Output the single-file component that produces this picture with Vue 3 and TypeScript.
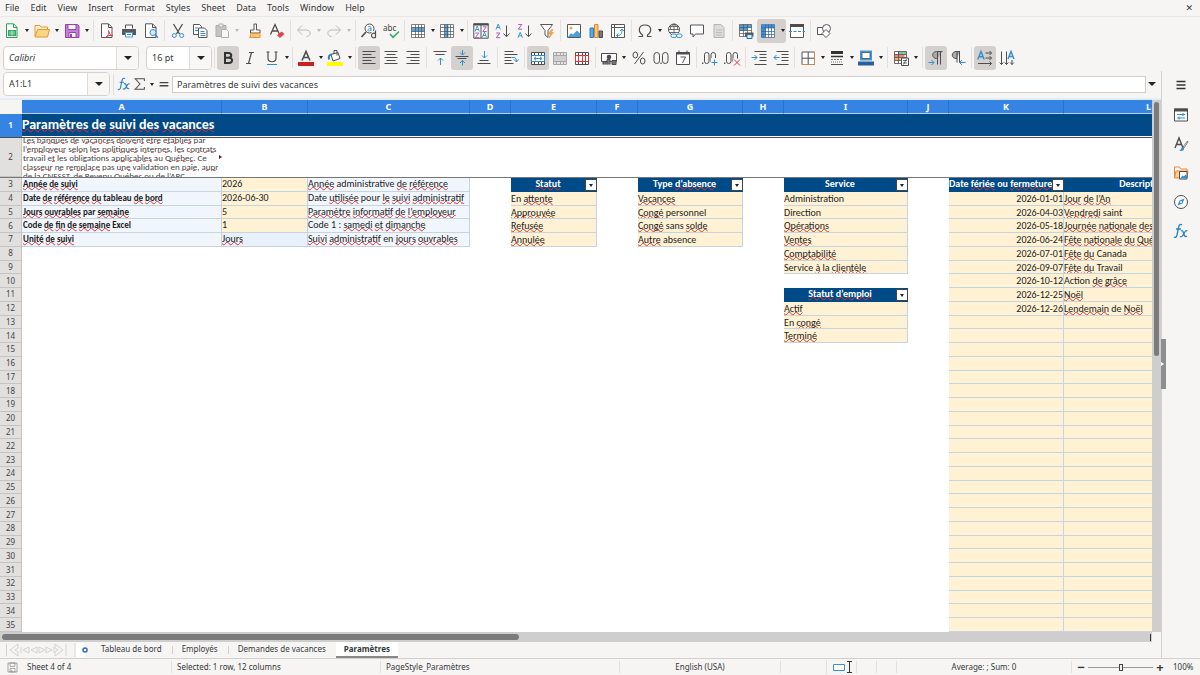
<script setup lang="ts">
import { ref } from 'vue'

interface Tool {
  id: string
  menu?: boolean
  active?: boolean
  dim?: boolean
  narrow?: boolean
}
interface Cell {
  text: string
  kind: string
  filter?: boolean
}

const menus = ['File', 'Edit', 'View', 'Insert', 'Format', 'Styles', 'Sheet', 'Data', 'Tools', 'Window', 'Help']
const columns = ['A', 'B', 'C', 'D', 'E', 'F', 'G', 'H', 'I', 'J', 'K', 'L']

const ink = 'fill="none" stroke="#4d4d4f"'
const blue = 'fill="none" stroke="#2f8fd0"'
const red = 'fill="none" stroke="#e0353d"'
const gridLines = 'M1.500 1.500h13v13h-13zM1.500 4.500h13M1.500 8.500h13M1.500 11.500h13M5.500 1.500v13M8.500 1.500v13M11.500 1.500v13'
const mergeGrid = 'M1.500 2.500h13v12h-13zM1.500 5.500h13M1.500 11.500h13M4.500 2.500v3M8.500 2.500v3M11.500 2.500v3M4.500 11.500v3M8.500 11.500v3M11.500 11.500v3'
const ff = 'font-family="Noto Sans, sans-serif"'
const letterA = (x: number, y: number) => `<path d="M${x} ${y + 5}l2.200-5.500l2.200 5.500M${x + 0.8} ${y + 3}h2.800" ${blue} stroke-width=".9"/>`
const letterZ = (x: number, y: number) => `<path d="M${x + 0.3} ${y}h3.600l-3.600 4.700h3.900" fill="none" stroke="#a44cb8" stroke-width=".9"/>`

const art: Record<string, string> = {
  new: `<path d="M2.500 .8h7l3.500 3.500v10.200h-10.500z" fill="#fff" stroke="#28a05a"/><path d="M9.500 1v3.500h3.500" fill="none" stroke="#28a05a"/><path d="M4 7h8v6h-8z" fill="#32a65f"/><path d="M5 9h6M5 11h6M8 7.500v5" stroke="#fff" stroke-width=".6"/>`,
  open: `<path d="M1 13.500v-11h5l1 1.500h6.500v3" fill="#fff3d8" stroke="#e8952e"/><path d="M1 14l2.500-7.500h12l-2 7.500z" fill="#fbd583" stroke="#e8952e"/>`,
  save: `<path d="M1.500 1.500h12l1.500 1.500v11.500h-13.500z" fill="#c77fd6" stroke="#9b3fb2"/><path d="M4 1.500h8v5h-8zM5 9.500h7v5h-7z" fill="#fff" stroke="#9b3fb2"/><path d="M6 11h2v3h-2z" fill="#9b3fb2"/>`,
  pdf: `<path d="M2.500 .8h7l3.500 3.500v10.200h-10.500z" fill="#fff" stroke="#56565a"/><path d="M9.500 1v3.500h3.500" ${ink}/><path d="M6.500 14.500c3-2 3.500-4 3-7c1 4 2 5 4.500 5c-3-.6-5 .2-7.500 2z" ${red}/>`,
  print: `<path d="M4.500 5.500v-3.500h7v3.500" fill="#fff" stroke="#4d4d4f"/><path d="M1 6h14v6h-14z" fill="#55585c"/><path d="M4.500 9.500h7v4.500h-7z" fill="#fff" stroke="#4596d8"/><path d="M6 11.500h4" ${blue}/>`,
  preview: `<path d="M2.500 .8h7l3.500 3.500v10.200h-10.500z" fill="#fff" stroke="#56565a"/><path d="M9.500 1v3.500h3.500" ${ink}/><circle cx="10" cy="9.500" r="3" fill="#d7edfb" stroke="#2f8fd0"/><path d="M12 11.500l3 3.200" stroke="#2f8fd0" stroke-width="1.400"/>`,
  cut: `<path d="M3.500 1l6 10M12.500 1l-6 10" ${ink} stroke-width="1.300"/><circle cx="4.300" cy="12.500" r="2" ${blue}/><circle cx="11.700" cy="12.500" r="2" ${blue}/>`,
  copy: `<path d="M1.500 1.500h6l2 2v8h-8z" fill="#fff" stroke="#56565a"/><path d="M6.500 5h6l2.500 2.500v7h-8.500z" fill="#fff" stroke="#56565a"/><path d="M3 5h3M3 7.500h3M8.500 8.500h4M8.500 10.500h5M8.500 12.500h5" ${blue}/>`,
  paste: `<path d="M2 2.500h10v11h-10z" fill="#c4c4c4" stroke="#adadad"/><path d="M5 1h4v3h-4z" fill="#eee" stroke="#adadad"/><path d="M7.500 6.500h5l2 2v6h-7z" fill="#f8f8f8" stroke="#adadad"/>`,
  clone: `<path d="M7 1h2.500v6h3.500v3h-9.500v-3h3.500z" fill="#fff" stroke="#56565a"/><path d="M3.500 10.500h9.500v4h-10.500c1-1 1-2 1-4z" fill="#fbc77a" stroke="#e8952e"/>`,
  clear: `<path d="M1.500 11.500l4.500-10l4.500 10M3 8h6" ${ink} stroke-width="1.300"/><path d="M8 12.500l4.500-4l3 2.500l-4.500 4z" fill="#e7424b"/>`,
  undo: `<path d="M2 7h8c6 0 5 6.500.5 6.500M6 2.500l-4.500 4.500l4.500 4.500" fill="none" stroke="#b9b9b9"/>`,
  redo: `<path d="M14 7h-8c-6 0-5 6.500-.5 6.500M10 2.500l4.500 4.500l-4.500 4.500" fill="none" stroke="#b9b9b9"/>`,
  find: `<circle cx="8.500" cy="5.500" r="4.500" fill="#fff" stroke="#4d4d4f"/><path d="M5 9l-4.500 5" stroke="#4d4d4f" stroke-width="1.600"/><path d="M7 4c1-1 3-1 3 1v3M10 5.700c-4-.5-4 2.800-1.500 2.200l1.500-1" ${blue} stroke-width=".9"/><path d="M10.500 8h5v7h-5z" fill="#f6f5f4"/><path d="M14.500 7.500v7.500M14.500 11c-1-1.500-4-1-4 1.500s3 3 4 1.500" ${ink} stroke-width="1.200"/>`,
  spell: `<text x="0" y="7.500" font-size="8" ${ff} fill="#3d3d3f">abc</text><path d="M7 11l3 3.300l6-5.800" fill="none" stroke="#35ac67" stroke-width="1.600"/>`,
  rows: `<path d="M1.500 1.500h13v13h-13z" fill="#fff"/><path d="M1.500 4.500h13v4h-13z" fill="#57a9e6"/><path d="${gridLines}" ${ink} stroke-width=".7"/>`,
  cols: `<path d="M1.500 1.500h13v13h-13z" fill="#fff"/><path d="M5.500 1.500h4v13h-4z" fill="#57a9e6"/><path d="${gridLines}" ${ink} stroke-width=".7"/>`,
  sort: `<path d="M.8 .8h14.400v14.400h-14.400zM8 1v14" fill="#fff" stroke="#4d4d4f"/><path d="M.5 .5h15v2h-15z" fill="#4d4d4f"/>${letterA(2, 3.500)}${letterZ(2, 10)}${letterZ(9.500, 3.800)}${letterA(9.300, 9.500)}`,
  asc: `${letterA(1, 1.500)}${letterZ(1, 10)}<path d="M11.500 2.500v11M8.500 10.500l3 3.200l3-3.200" ${ink}/>`,
  desc: `${letterZ(1, 1.500)}${letterA(1, 9.800)}<path d="M11.500 2.500v11M8.500 10.500l3 3.200l3-3.200" ${ink}/>`,
  filter: `<path d="M1.500 1.500h12l-4.500 6v7l-3-2.500v-4.500z" fill="#fff" stroke="#56565a"/><path d="M12.500 6.500l-3.500 4.500h2.500l-1.500 4l4.500-5.500h-2.500l2-3z" fill="#f5a649" stroke="#e8852e" stroke-width=".5"/>`,
  image: `<path d="M1.500 1.500h13v13h-13z" fill="#fff" stroke="#56565a"/><circle cx="5" cy="5" r="1.500" fill="#f5a649"/><path d="M2 14l3-4l2 1.500l4-4l3.500 3.500v3z" fill="#4b9fdf"/>`,
  chart: `<path d="M2 5h3.500v9.500h-3.500z" fill="#57a9e6" stroke="#2f7fc0"/><path d="M6.500 1.500h3.500v13h-3.500z" fill="#fbc77a" stroke="#e8852e"/><path d="M11 8h3.500v6.500h-3.500z" fill="#77777a" stroke="#4d4d4f"/>`,
  pivot: `<path d="M1.500 1.500h13v13h-13zM1.500 4.500h13M4.500 1.500v13" fill="#fff" stroke="#56565a"/><path d="M7 12.500c5 0 5-3 5-6M10 8l2-2l2 2M8.500 10.500l-2 2l2 2" ${blue}/>`,
  omega: `<path d="M1.500 13.500h4v-1.500c-5-3.500-4-10 2.500-10s7.500 6.500 2.500 10v1.500h4" ${ink} stroke-width="1.200"/>`,
  link: `<circle cx="7" cy="6.500" r="5.500" fill="#fff" stroke="#4d4d4f"/><path d="M1.500 6.500h11M7 1v11M2.500 3.500h9M2.500 9.500h9" ${ink} stroke-width=".8"/><path d="M4 6.500q-2-2.500 3-5.500q5 3 3 5.500" ${ink} stroke-width=".8"/><path d="M5 10h10v5h-10z" fill="#f6f5f4"/><rect x="4" y="11" width="5.500" height="3.500" rx="1.700" ${blue}/><rect x="9.500" y="11" width="5.500" height="3.500" rx="1.700" ${blue}/>`,
  comment: `<path d="M1.500 2h13v9h-8l-2.500 3v-3h-2.500z" fill="#fff" stroke="#56565a"/>`,
  header: `<path d="M3 1.500h7l3 3v10h-10z" fill="#ddd" stroke="#b5b5b5"/><path d="M5 7h6M5 9.500h6M5 12h6" stroke="#bbb"/>`,
  printarea: `<path d="M1.500 1.500h12v12h-12z" fill="#fff"/><path d="M1.500 1.500h12v3h-12zM1.500 1.500h8v6h-8z" fill="#4b9fdf"/><path d="M1.500 1.500h12v12h-12zM1.500 4.500h12M1.500 7.500h12M1.500 10.500h12M5.500 1.500v12M9.500 1.500v12" ${ink} stroke-width=".7"/><path d="M7 9.500h8.500v4h-8.500z" fill="#55585c"/><path d="M9 11.500h5v4h-5z" fill="#d7edfb" stroke="#2f6fb0"/>`,
  freeze: `<path d="M1.500 1.500h13v13h-13z" fill="#fff"/><path d="M1.500 2h13v3h-13zM1.500 2h4v12.500h-4z" fill="#3b8fdb"/><path d="M1.500 1.500h13v13h-13zM1.500 5h13M1.500 8.500h13M1.500 11.500h13M5.500 1.500v13M8.500 1.500v13M11.500 1.500v13" fill="none" stroke="#2b5f92" stroke-width=".7"/>`,
  split: `<path d="M1.500 1.500h13v13h-13z" fill="#fff" stroke="#56565a"/><path d="M1 1h14v3h-14z" fill="#4d4d4f"/><path d="M0 8.500h16" stroke="#2f8fd0" stroke-dasharray="3 1.500"/>`,
  shapes: `<path d="M1.500 4.500h7v7h-7z" fill="#fff" stroke="#56565a"/><circle cx="10.500" cy="5.500" r="4" fill="#fff" stroke="#56565a"/><path d="M10 6.500l4 4l-4 4l-4-4z" fill="#fff" stroke="#56565a"/>`,
  bold: `<path d="M5 3h3.500c3.800 0 3.500 4.700 0 4.700h-3.500zM5 7.700h4c4.200 0 4 5.300 0 5.300h-4z" fill="none" stroke="#333" stroke-width="2"/>`,
  italic: `<path d="M7 2.500h5M4 13.500h5M9.500 2.500l-3 11" ${ink} stroke-width="1.200"/>`,
  underline: `<path d="M4 2v6c0 5 8 5 8 0v-6M2.500 2h3M10.500 2h3" ${ink} stroke-width="1.200"/><path d="M3 14.500h10" stroke="#2f8fd0"/>`,
  fontcolor: `<path d="M4 10.500l4-9l4 9M5.300 7.500h5.400" ${ink} stroke-width="1.600"/><path d="M0 12h16v4h-16z" fill="#c9211e"/>`,
  fill: `<path d="M4 4.500l7-2l2 6l-7 2.500z" fill="#fff" stroke="#4d4d4f"/><path d="M7 4v-3.500h3v5" ${ink}/><path d="M5 4.500q-4 0-3 5" stroke="#2f7fc0" fill="none" stroke-width="2"/><path d="M0 12h16v4h-16z" fill="#ff0"/>`,
  left: `<path d="M1.500 1.500h13M1.500 4.500h9M1.500 7.500h13M1.500 10.500h9M1.500 13.500h13" ${ink}/>`,
  center: `<path d="M1.500 1.500h13M3.500 4.500h9M1.500 7.500h13M3.500 10.500h9M1.500 13.500h13" ${ink}/>`,
  right: `<path d="M1.500 1.500h13M5.500 4.500h9M1.500 7.500h13M5.500 10.500h9M1.500 13.500h13" ${ink}/>`,
  top: `<path d="M1.500 1.500h13M3.500 4.500h9" ${ink}/><path d="M8.500 15v-7M6 10.500l2.500-2.500l2.500 2.500" ${blue}/>`,
  middle: `<path d="M1.500 6.500h13M3.500 8.500h9" ${ink}/><path d="M8.500 0v5M6 2.500l2.500 2.500l2.500-2.500M8.500 15.500v-5M6 13l2.500-2.500l2.500 2.500" ${blue}/>`,
  bottom: `<path d="M1.500 13.500h13M3.500 10.500h9" ${ink}/><path d="M8.500 1v7M6 5.500l2.500 2.500l2.500-2.500" ${blue}/>`,
  wrap: `<path d="M1.500 1.500h9M1.500 4.500h13M1.500 7.500h7M1.500 10.500h7M1.500 13.500h9" ${ink}/><path d="M9 7.500h2.500q2 0 2 4.500M11 9.500l2.500 2.500l2-2.500" ${blue}/>`,
  merge: `<path d="M1.500 2.500h13v12h-13z" fill="#fff"/><path d="${mergeGrid}" ${ink}/><path d="M1.500 5.500h13v6h-13zM4 8.500h8M6 6.800l-2 1.700l2 1.700M10 6.800l2 1.700l-2 1.700" ${blue}/>`,
  merge2: `<path d="M1.500 2.500h13v12h-13z" fill="#e3e3e3"/><path d="M1.500 5.500h13v6h-13z" fill="#cfcfcf"/><path d="${mergeGrid}" fill="none" stroke="#a7a7a7"/>`,
  unmerge: `<path d="M1.500 2.500h13v12h-13z" fill="#fff"/><path d="${mergeGrid}" ${ink}/><path d="M1.500 5.500h13v6h-13zM4.500 5.500v6M8.500 5.500v6M11.500 5.500v6" ${red}/>`,
  currency: `<path d="M.5 3.500h15v8h-15z" fill="#fff" stroke="#4d4d4f"/><circle cx="8" cy="7" r="2.300" fill="#4d4d4f"/><path d="M2 14.500v-3h3v3M6 14.500v-5h3v5M11 14.500v-4h4v4z" fill="#77777a" stroke="#4d4d4f"/>`,
  percent: `<ellipse cx="4.300" cy="5" rx="2.300" ry="3" ${ink}/><ellipse cx="11.700" cy="11" rx="2.300" ry="3" ${ink}/><path d="M12.500 2l-9 12" ${ink}/>`,
  number: `<rect x="1" y="2.500" width="5.500" height="11" rx="2.700" ${ink}/><rect x="9.500" y="2.500" width="5.500" height="11" rx="2.700" ${ink}/><path d="M8 12.500v1.500" stroke="#4d4d4f" stroke-width="1.300"/>`,
  date: `<path d="M1.500 2.500h13v12h-13z" fill="#fff" stroke="#4d4d4f"/><path d="M1 2.500h14v2h-14z" fill="#4d4d4f"/><path d="M4 .5v3M12 .5v3M5.500 7h5l-3 6" ${ink}/>`,
  adddec: `<path d="M.7 12.500v1.500" stroke="#4d4d4f" stroke-width="1.300"/><rect x="2.500" y="2.500" width="4.500" height="11" rx="2.200" ${ink}/><rect x="9" y="2.500" width="4.500" height="11" rx="2.200" ${ink}/><path d="M9 8h7v8h-7z" fill="#f6f5f4"/><path d="M12.500 9.500v6M9.500 12.500h6" ${blue}/>`,
  deldec: `<path d="M.7 12.500v1.500" stroke="#4d4d4f" stroke-width="1.300"/><rect x="2.500" y="2.500" width="4.500" height="11" rx="2.200" ${ink}/><rect x="9" y="2.500" width="4.500" height="11" rx="2.200" ${ink}/><path d="M9 8.500h7v8h-7z" fill="#f6f5f4"/><path d="M10 9.500l6 6M16 9.500l-6 6" ${red}/>`,
  indent: `<path d="M3.500 1.500h12M8.500 4.500h7M8.500 7.500h7M8.500 10.500h7M3.500 14.500h12" ${ink}/><path d="M.5 7.500h5.500M3.500 5l2.500 2.500l-2.500 2.500" ${blue}/>`,
  outdent: `<path d="M3.500 1.500h12M8.500 4.500h7M8.500 7.500h7M8.500 10.500h7M3.500 14.500h12" ${ink}/><path d="M1 7.500h5.500M3.500 5l-2.500 2.500l2.500 2.500" ${blue}/>`,
  borders: `<path d="M2 2h12.500v12.500h-12.500z" fill="#fff" stroke="#56565a"/><path d="M8.200 2v12.500M2 8.200h12.500" ${ink}/><path d="M2 14.500h12.500v-12.500" fill="none" stroke="#c98a4d"/>`,
  linestyle: `<path d="M2 2.500h12" stroke="#333" stroke-width="3"/><path d="M2 6.500h12" stroke="#333" stroke-width="1.500"/><path d="M2 9.500h12" stroke="#77777a" stroke-dasharray="2 1"/><path d="M2 12h12" stroke="#77777a" stroke-dasharray="1 1"/><path d="M2 14.500h12" stroke="#4d4d4f"/>`,
  bordercolor: `<path d="M3 1.500h10v8h-10z" fill="#fff" stroke="#4596d8" stroke-width="2"/><path d="M4 2.500h8v6h-8z" ${ink} stroke-width=".8"/><path d="M0 11.500h16v4h-16z" fill="#2a6099"/>`,
  conditional: `<path d="M1.500 1.500h12v12h-12z" fill="#fff"/><path d="M5 1.500h8v3h-8z" fill="#7cc896"/><path d="M1.500 4.500h10v3h-10z" fill="#f0827c"/><path d="M1.500 7.500h6v3h-6z" fill="#f7b16a"/><path d="M1.500 1.500h12v12h-12zM1.500 4.500h12M1.500 7.500h12M1.500 10.500h12M5.500 1.500v12" ${ink} stroke-width=".8"/><path d="M8.500 8h7v7.500h-7z" fill="#fff" stroke="#4d4d4f"/><path d="M10 10.500h4M10 13h4M13.500 9l-3 5.500" ${ink} stroke-width=".8"/>`,
  ltr: `<path d="M14.500 1.500h-6c-5 0-5 7 0 7h1" fill="#aaa" stroke="#56565a"/><path d="M9.500 1.500v13M12.500 1.500v13" ${ink}/><path d="M.5 12.500h5.500M3.500 10l2.500 2.500l-2.500 2.500" ${blue}/>`,
  rtl: `<path d="M10 1.500h-4c-5 0-5 7 0 7h1" fill="#aaa" stroke="#56565a"/><path d="M7 1.500v11M9.500 1.500v11" ${ink}/><path d="M9.500 12.500h6M12 10l-2.500 2.500l2.500 2.500" ${blue}/>`,
  horiz: `<path d="M.8 9.500l3.200-8l3.200 8M2 6.800h4" ${blue} stroke-width="1.400"/><path d="M8.500 3h6M12.500 1l2 2l-2 2M8.500 8h6M12.500 6l2 2l-2 2M1 13.500h13.500M12.500 11.500l2 2l-2 2" ${ink}/>`,
  vert: `<path d="M9 9l3-7.500l3 7.500M10 6.500h4" ${blue} stroke-width="1.400"/><path d="M2.500 1.500v13M.7 12.500l1.800 2l1.800-2M7.500 1.500v13M5.700 12.500l1.800 2l1.800-2M13 10v4.500M11.200 12.500l1.800 2l1.800-2" ${ink}/>`,
  fx: `<path d="M9 2c-2-1.500-3 0-3.500 3l-1.500 7c-.4 2-1.500 3-3 2M3 6h5" fill="none" stroke="#2581c9" stroke-width="1.300"/><path d="M8 8c1.500-1 2 0 2.500 2s1.300 4.500 3.500 3M14.500 8c-1.500-1-2.500 .5-3.500 2.500s-2.500 4-4 3" fill="none" stroke="#2581c9" stroke-width="1.300"/>`,
  sigma: `<path d="M13 4.500v-2.500h-10.500l5.500 6l-5.500 6h10.500v-2.500" ${ink} stroke-width="1.200"/>`,
  equals: `<path d="M3 6.500h10M3 10h10" stroke="#444" stroke-width="1.500"/>`,
  burger: `<path d="M3.500 4.500h9M3.500 8h9M3.500 11.500h9" stroke="#333" stroke-width="1.500"/>`,
  properties: `<path d="M1.500 2h13v12h-13z" fill="#fff" stroke="#4d4d4f"/><path d="M1 1.500h14v3h-14z" fill="#4d4d4f"/><path d="M4 7.500h8M10 6v3M4 11h8M6 9.500v3" ${blue}/>`,
  styles: `<path d="M2 12l4-10l4 10M3.500 8.500h5" ${ink} stroke-width="1.400"/><path d="M14.500 5l-4.500 6l1 1l4-6z" fill="#fff" stroke="#4d4d4f" stroke-width=".7"/><path d="M10 11c-2 0-1.500 3-4 3.500c3 1 5.500 0 5-2.500z" fill="#2f8fd0"/>`,
  gallery: `<path d="M1.500 12.500v-10.500h5l1 2h6.500v2" fill="#fff" stroke="#e8852e"/><path d="M1.500 13l1.500-7h12l-1 7z" fill="#fbd09a" stroke="#e8852e"/><path d="M6.500 6.500h7.500v7.500h-7.500z" fill="#fff" stroke="#4d4d4f"/><path d="M7 13.500l2.500-3l1.500 1l1.500-2l1.500 2v2z" fill="#2f8fd0"/>`,
  navigator: `<circle cx="8" cy="8" r="6.500" fill="#fff" stroke="#4d4d4f"/><path d="M11.500 4.500l-2 5l-5 2l2-5z" fill="#2f8fd0"/><circle cx="8" cy="8" r="1" fill="#fff"/>`,
  docsave: `<path d="M2.500 2.500h11v11h-11zM5 2.500h6v4h-6zM5 9h6v4.500h-6zM7 10.500v3" fill="#fff" stroke="#8b8b8b"/>`,
}

const standardBar: Tool[][] = [
  [{ id: 'new', menu: true }, { id: 'open', menu: true }, { id: 'save', menu: true }],
  [{ id: 'pdf' }, { id: 'print' }, { id: 'preview' }],
  [{ id: 'cut' }, { id: 'copy' }, { id: 'paste', menu: true, dim: true }, { id: 'clone' }, { id: 'clear' }],
  [{ id: 'undo', menu: true, dim: true }, { id: 'redo', menu: true, dim: true }],
  [{ id: 'find' }, { id: 'spell' }],
  [{ id: 'rows', menu: true, narrow: true }, { id: 'cols', menu: true, narrow: true }],
  [{ id: 'sort' }, { id: 'asc' }, { id: 'desc' }, { id: 'filter' }],
  [{ id: 'image' }, { id: 'chart' }, { id: 'pivot' }],
  [{ id: 'omega', menu: true }, { id: 'link' }, { id: 'comment' }, { id: 'header' }],
  [{ id: 'printarea' }, { id: 'freeze', menu: true, active: true, narrow: true }, { id: 'split' }],
  [{ id: 'shapes' }],
]
const formatBar: Tool[][] = [
  [{ id: 'bold', active: true }, { id: 'italic' }, { id: 'underline', menu: true, narrow: true }],
  [{ id: 'fontcolor', menu: true, narrow: true }, { id: 'fill', menu: true, narrow: true }],
  [{ id: 'left', active: true }, { id: 'center' }, { id: 'right' }],
  [{ id: 'top' }, { id: 'middle', active: true }, { id: 'bottom' }],
  [{ id: 'wrap' }],
  [{ id: 'merge', active: true }, { id: 'merge2' }, { id: 'unmerge' }],
  [{ id: 'currency', menu: true }, { id: 'percent' }, { id: 'number' }, { id: 'date' }],
  [{ id: 'adddec' }, { id: 'deldec' }],
  [{ id: 'indent' }, { id: 'outdent' }],
  [{ id: 'borders', menu: true, narrow: true }, { id: 'linestyle', menu: true, narrow: true }, { id: 'bordercolor', menu: true }],
  [{ id: 'conditional', menu: true }],
  [{ id: 'ltr', active: true }, { id: 'rtl' }],
  [{ id: 'horiz', active: true }, { id: 'vert' }],
]
const panels = ['properties', 'styles', 'gallery', 'navigator', 'fx']

/* Words wrapped in underscores are flagged by the spell checker. */
const note =
  '_Les_ _banques_ _de_ _vacances_ _doivent_ _être_ _établies_ par|_l’employeur_ _selon_ _les_ _politiques_ _internes_, _les_ _contrats_ _de_|travail _et_ les obligations _applicables_ au _Québec_. Ce|_classeur_ _ne_ _remplace_ pas _une_ validation en _paie_, _auprès_|_de_ la _CNESST_, _de_ _Revenu_ _Québec_ ou _de_ _l’ARC_.'

const cells: Record<string, Cell> = {}
const put = (col: string, from: number, kind: string, texts: string[]) =>
  texts.forEach((text, i) => (cells[col + (from + i)] = { text, kind }))
const head = (at: string, text: string) => (cells[at] = { text, kind: 'head', filter: true })

put('A', 3, 'label', ['_Année_ _de_ _suivi_', 'Date _de_ _référence_ _du_ tableau _de_ _bord_', '_Jours_ _ouvrables_ par _semaine_', 'Code _de_ _fin_ _de_ _semaine_ Excel', '_Unité_ _de_ _suivi_'])
put('B', 3, 'entry', ['2026', '2026-06-30', '5', '1'])
put('B', 7, 'calc', ['_Jours_'])
put('C', 3, 'info', ['_Année_ administrative _de_ _référence_', 'Date _utilisée_ pour _le_ _suivi_ _administratif_', '_Paramètre_ _informatif_ _de_ _l’employeur_', 'Code 1 : _samedi_ _et_ _dimanche_', '_Suivi_ _administratif_ en _jours_ _ouvrables_'])
head('E3', '_Statut_')
put('E', 4, 'entry low', ['En _attente_', '_Approuvée_', '_Refusée_', '_Annulée_'])
head('G3', 'Type _d’absence_')
put('G', 4, 'entry low', ['_Vacances_', '_Congé_ personnel', '_Congé_ sans _solde_', '_Autre_ absence'])
head('I3', 'Service')
put('I', 4, 'entry low', ['Administration', 'Direction', '_Opérations_', '_Ventes_', '_Comptabilité_', 'Service _à_ la _clientèle_'])
head('I11', '_Statut_ _d’emploi_')
put('I', 12, 'entry low', ['_Actif_', 'En _congé_', '_Terminé_'])
put('K', 4, 'entry', Array<string>(32).fill(''))
put('L', 4, 'entry', Array<string>(32).fill(''))
head('K3', 'Date _fériée_ ou _fermeture_')
head('L3', 'Description')
put('K', 4, 'entry low date', ['2026-01-01', '2026-04-03', '2026-05-18', '2026-06-24', '2026-07-01', '2026-09-07', '2026-10-12', '2026-12-25', '2026-12-26'])
put('L', 4, 'entry low', ['_Jour_ _de_ _l’An_', '_Vendredi_ saint', '_Journée_ _nationale_ _des_ _patriotes_', '_Fête_ _nationale_ _du_ _Québec_', '_Fête_ _du_ Canada', '_Fête_ _du_ Travail', 'Action _de_ _grâce_', '_Noël_', '_Lendemain_ de _Noël_'])

const pieces = (text: string) => text.split('_').map((t, i) => ({ t, bad: i % 2 === 1 }))
const bodyRows = Array.from({ length: 33 }, (_, i) => i + 3)

const sheets = ['Tableau de bord', 'Employés', 'Demandes de vacances', 'Paramètres']
const current = ref('Paramètres')
const formula = ref('Paramètres de suivi des vacances')
const nameBox = ref('A1:L1')
const fontName = ref('Calibri')
const fontSize = ref('16 pt')
const zoom = ref(100)
</script>

<template>
  <div class="app">
    <nav class="menubar">
      <button v-for="m in menus" :key="m">{{ m }}</button>
      <button class="close" aria-label="Close">✕</button>
    </nav>

    <div class="toolbar">
      <div v-for="(group, g) in standardBar" :key="g" class="group">
        <template v-for="tool in group" :key="tool.id">
          <button class="tool" :class="{ active: tool.active, joined: tool.active && tool.menu }" :aria-label="tool.id">
            <svg viewBox="0 0 16 16" v-html="art[tool.id]"></svg>
          </button>
          <button v-if="tool.menu" class="more" :class="[tool.id + '-more', { active: tool.active, dim: tool.dim, narrow: tool.narrow }]" :aria-label="tool.id + ' options'"></button>
        </template>
      </div>
    </div>

    <div class="toolbar format">
      <div class="combo font">
        <input v-model="fontName" aria-label="Font name" /><button aria-label="Font list"></button>
      </div>
      <div class="combo size">
        <input v-model="fontSize" aria-label="Font size" /><button aria-label="Size list"></button>
      </div>
      <i class="bar"></i>
      <div v-for="(group, g) in formatBar" :key="g" class="group">
        <template v-for="tool in group" :key="tool.id">
          <button class="tool" :class="{ active: tool.active }" :aria-label="tool.id">
            <svg viewBox="0 0 16 16" v-html="art[tool.id]"></svg>
          </button>
          <button v-if="tool.menu" class="more" :class="{ narrow: tool.narrow }" :aria-label="tool.id + ' options'"></button>
        </template>
      </div>
    </div>

    <div class="work">
      <main class="document">
        <div class="formulabar">
          <div class="combo name">
            <input v-model="nameBox" aria-label="Name box" /><button aria-label="Named ranges"></button>
          </div>
          <i class="bar"></i>
          <button class="fn" aria-label="Function wizard"><svg viewBox="0 0 16 16" v-html="art.fx"></svg></button>
          <button class="fn" aria-label="Sum"><svg viewBox="0 0 16 16" v-html="art.sigma"></svg></button>
          <button class="more" aria-label="Sum options"></button>
          <button class="fn" aria-label="Formula"><svg viewBox="0 0 16 16" v-html="art.equals"></svg></button>
          <input v-model="formula" class="formula" aria-label="Input line" />
          <button class="more big" aria-label="Expand"></button>
        </div>

        <div class="sheet">
          <table>
            <thead>
              <tr class="cols">
                <th class="corner"></th>
                <th v-for="c in columns" :key="c">{{ c }}</th>
              </tr>
              <tr class="title">
                <th class="rownum">1</th>
                <td>
                  <span v-for="(p, i) in pieces('_Paramètres_ _de_ _suivi_ _des_ _vacances_')" :key="i" :class="{ bad: p.bad }">{{ p.t }}</span>
                </td>
              </tr>
              <tr class="note">
                <th class="rownum">2</th>
                <td>
                  <p v-for="(line, n) in note.split('|')" :key="n">
                    <span v-for="(p, i) in pieces(line)" :key="i" :class="{ bad: p.bad }">{{ p.t }}</span>
                  </p>
                </td>
              </tr>
            </thead>
            <tbody>
              <tr v-for="r in bodyRows" :key="r">
                <th class="rownum">{{ r }}</th>
                <td v-for="c in columns" :key="c" :class="cells[c + r]?.kind">
                  <template v-if="cells[c + r]">
                    <div class="value"><span v-for="(p, i) in pieces(cells[c + r].text)" :key="i" :class="{ bad: p.bad }">{{ p.t }}</span></div>
                    <button v-if="cells[c + r].filter" class="dropfilter" aria-label="Filter"></button>
                  </template>
                </td>
              </tr>
            </tbody>
          </table>
          <div class="vscroll"><i></i></div>
        </div>
        <div class="hscroll"><i></i><b></b></div>

        <div class="tabs">
          <svg class="nav" viewBox="0 0 62 14">
            <path d="M1.500 1v12M13 1l-8 6l8 6v-4l-3-2l3-2zM16 4v6M24 4l-6 3l6 3zM32 4l-6 3l6 3zM34 4l6 3l-6 3zM41 4l6 3l-6 3zM49 4v6M50 1l8 6l-8 6v-4l3-2l-3-2zM61 1v12" />
          </svg>
          <button class="add" aria-label="Add sheet">
            <svg viewBox="0 0 14 14"><path d="M1 0h8l2 4v10h-10z" fill="#fff" /><path d="M1 0v14" stroke="#d8d6d4" /><circle cx="11" cy="7" r="2" fill="#fff" stroke="#2a6bb5" stroke-width="1.500" /></svg>
          </button>
          <button v-for="s in sheets" :key="s" class="tab" :class="{ current: s === current }" @click="current = s">{{ s }}</button>
        </div>
      </main>

      <aside class="sidebar">
        <button class="burger" aria-label="Sidebar settings"><svg viewBox="0 0 16 16" v-html="art.burger"></svg></button>
        <button v-for="p in panels" :key="p" :aria-label="p"><svg viewBox="0 0 16 16" v-html="art[p]"></svg></button>
        <i class="handle"></i>
      </aside>
    </div>

    <footer class="status">
      <span class="doc"><svg viewBox="0 0 16 16" v-html="art.docsave"></svg></span>
      <span class="first">Sheet 4 of 4</span>
      <span>Selected: 1 row, 12 columns</span>
      <span>PageStyle_Paramètres</span>
      <span class="mid">English (USA)</span>
      <span></span>
      <span class="cursor">
        <svg viewBox="0 0 20 14"><path d="M1.500 4.500h11v6h-11z" fill="#fff" stroke="#3b93d3" /><path d="M15 1.500h5M15 12.500h5M17.500 1.500v11" fill="none" stroke="#333" /></svg>
      </span>
      <span></span>
      <span></span>
      <span class="mid">Average: ; Sum: 0</span>
      <span class="zoom">
        <button aria-label="Zoom out">−</button>
        <input v-model="zoom" type="range" min="0" max="200" aria-label="Zoom" />
        <button aria-label="Zoom in">+</button>
      </span>
      <span class="pct">{{ zoom }}%</span>
    </footer>
  </div>
</template>

<style>
html,
body {
  margin: 0;
  overflow: hidden;
}
</style>

<style scoped>
.app {
  display: flex;
  flex-direction: column;
  height: 100vh;
  background: #f6f5f4;
  color: #35383a;
  font: 8px/12px 'Noto Sans', sans-serif;
  overflow: hidden;
}
button,
input {
  font: inherit;
  color: inherit;
  border: 0;
  padding: 0;
  margin: 0;
  background: none;
  min-width: 0;
  box-sizing: border-box;
}
svg {
  display: block;
  overflow: visible;
}
.menubar {
  display: flex;
  gap: 11px;
  height: 17px;
  padding: 0 7px 0 5px;
  box-sizing: border-box;
  border-bottom: 1px solid #eae8e6;
  font-size: 9px;
}
.menubar .close {
  margin-left: auto;
  font-weight: 700;
  font-family: 'DejaVu Sans', sans-serif;
}
.toolbar {
  display: flex;
  align-items: center;
  height: 27px;
  padding-left: 1px;
}
.toolbar.format {
  padding-left: 3px;
}
.group {
  display: flex;
  align-items: center;
}
.group + .group::before,
.bar {
  content: '';
  width: 1px;
  height: 21px;
  margin: 0 2px;
  background: #e2e0de;
}
.tool {
  display: grid;
  place-items: center;
  width: 22px;
  height: 24px;
  border-radius: 3px;
}
.tool svg,
.fn svg,
.sidebar svg {
  width: 16px;
  height: 16px;
}
.active {
  background: #d3d0cd;
}
.joined {
  border-radius: 3px 0 0 3px;
}
.more {
  display: grid;
  place-items: center;
  width: 8px;
  height: 24px;
}
.more.active {
  border-radius: 0 3px 3px 0;
}
.more.narrow {
  width: 7px;
}
.more::before,
.combo button::before,
.dropfilter::before {
  content: '';
  border: 2px solid transparent;
  border-top: 3px solid #222;
  border-bottom: 0;
}
.more.dim::before {
  border-top-color: #bbb;
}
.paste-more {
  margin-right: 3px;
}
.more.big::before,
.combo button::before {
  border-width: 4px 4px 0;
}
.combo {
  display: flex;
  height: 24px;
  box-sizing: border-box;
  background: #fff;
  border: 1px solid #d5d1ce;
  border-radius: 4px;
  overflow: hidden;
}
.combo input {
  flex: 1;
  padding-left: 5px;
  font-size: 9px;
}
.combo button {
  display: grid;
  place-items: center;
  width: 22px;
  background: #f8f7f6;
  border-left: 1px solid #dedbd8;
}
.combo.font {
  width: 136px;
  margin-right: 7px;
}
.combo.font input {
  font-style: italic;
}
.combo.size {
  width: 66px;
}
.combo.name {
  width: 107px;
  margin-right: 1px;
}
.work {
  flex: 1;
  display: flex;
  min-height: 0;
}
.document {
  flex: 1;
  min-width: 0;
  display: flex;
  flex-direction: column;
}
.formulabar {
  display: flex;
  align-items: center;
  height: 27px;
  padding: 0 4px 1px 3px;
  box-sizing: border-box;
}
.fn {
  display: grid;
  place-items: center;
  width: 16px;
  height: 20px;
}
.fn svg {
  width: 14px;
  height: 14px;
}
.formula {
  flex: 1;
  height: 17px;
  padding-left: 4px;
  background: #fff;
  border: 1px solid #d0cdca;
  font-size: 9px;
}
.more.big {
  width: 11px;
}
.sheet {
  flex: 1;
  min-height: 0;
  display: flex;
  border-top: 2px solid #e3edfa;
}
table {
  flex: 1;
  min-width: 0;
  display: flex;
  flex-direction: column;
  background: #fff;
  overflow: hidden;
  color: #1c1c1c;
}
thead {
  display: block;
}
tbody {
  flex: 1;
  min-height: 0;
  display: grid;
  grid-template-rows: repeat(33, minmax(0, 1fr));
}
tr {
  display: grid;
  grid-template-columns: 22px 200px 86px 162px 41px 86px 41px 105px 41px 124px 41px 115px 170px;
  min-height: 0;
}
th,
td {
  display: block;
  padding: 0;
  box-sizing: border-box;
  overflow: hidden;
}
.cols {
  height: 14px;
}
.cols th {
  color: #fff;
  font-size: 9px;
  line-height: 13px;
  background: #3584e4;
  border-right: 1px solid #2a72cb;
  border-bottom: 1px solid #b8d2f2;
}
.cols .corner {
  background: #f6f5f4;
  border-color: #f6f5f4;
}
.rownum {
  display: grid;
  place-items: center;
  font-weight: 400;
  color: #444;
  background: #e1e0df;
  border-right: 1px solid #c6c4c2;
  border-bottom: 1px solid #c6c4c2;
}
.title {
  height: 24px;
  border-bottom: 1px solid #4c4c4c;
  box-sizing: border-box;
}
.title .rownum {
  color: #fff;
  font-weight: 700;
  background: #3584e4;
  border-color: #3584e4;
}
.title td {
  grid-column: 2 / -1;
  background: #004b87;
  border-bottom: 1px solid #fff;
  color: #fff;
  font: 700 14px/22px Carlito, Lato, sans-serif;
}
.note {
  height: 40px;
  border-bottom: 1px solid #777;
  box-sizing: border-box;
}
.note td {
  position: relative;
  width: 200px;
  display: flex;
  flex-direction: column;
  justify-content: center;
  padding-right: 4px;
}
.note td::after {
  content: '';
  position: absolute;
  right: 0;
  top: 17px;
  border: 2px solid transparent;
  border-left: 3px solid #5c1a1a;
  border-right: 0;
}
.note p {
  flex: none;
  margin: 0;
  padding-left: 1px;
  white-space: pre;
  overflow: hidden;
  font: 9px/9px Carlito, Lato, sans-serif;
  color: #444;
}
tbody td {
  display: flex;
  font: 10px/12px Carlito, Lato, sans-serif;
}
.value {
  flex: 1;
  min-width: 0;
  white-space: pre;
  overflow: hidden;
}
.label,
.info,
.calc,
.entry {
  border-right: 1px solid #c5d5e0;
  border-bottom: 1px solid #c5d5e0;
}
.label,
.info {
  background: #f1f6fc;
}
.calc {
  background: #e8f0f9;
}
.entry {
  background: #fff2d4;
}
.low {
  line-height: 14px;
}
.label {
  padding-left: 1px;
  font-weight: 700;
  font-size: 9px;
}
.date {
  text-align: right;
}
.head {
  background: #004b87;
  color: #fff;
  font-weight: 700;
  text-align: center;
}
.dropfilter {
  flex: none;
  display: grid;
  place-items: center;
  width: 12px;
  height: 12px;
  margin-top: 1px;
  background: #fff;
  border: 1px solid #444;
}
.bad {
  text-decoration: underline wavy #e03030 1px;
  text-decoration-skip-ink: none;
  text-underline-offset: -1px;
}
.vscroll {
  width: 9px;
  background: #cecece;
  padding: 2px 2px 0;
  box-sizing: border-box;
}
.vscroll i {
  display: block;
  height: 48%;
  border-radius: 3px;
  background: #7b7b7b;
}
.hscroll {
  display: flex;
  align-items: center;
  justify-content: space-between;
  height: 10px;
  margin-right: 9px;
  padding: 0 1px 0 2px;
  background: #cecece;
}
.hscroll i {
  width: 45%;
  height: 6px;
  border-radius: 3px;
  background: #7b7b7b;
}
.hscroll b {
  width: 1px;
  height: 7px;
  background: #333;
}
.tabs {
  display: flex;
  align-items: center;
  height: 16px;
}
.nav {
  width: 62px;
  height: 14px;
  margin: 0 7px 0 5px;
  fill: none;
  stroke: #d4d2d0;
}
.add {
  width: 14px;
  height: 14px;
  margin-right: 3px;
}
.tab {
  height: 16px;
  padding: 0 10px;
  border-bottom: 2px solid transparent;
}
.tab + .tab {
  background: linear-gradient(#d2d0ce, #d2d0ce) 0 4px / 1px 8px no-repeat;
}
.tab.current {
  padding: 0 8px;
  font-weight: 700;
  background: #fff;
  border-bottom-color: #888;
}
.sidebar {
  position: relative;
  width: 39px;
  box-sizing: border-box;
  border-left: 1px solid #d4d2d0;
  display: flex;
  flex-direction: column;
  align-items: center;
}
.sidebar button {
  display: grid;
  place-items: center;
  width: 24px;
  height: 29px;
}
.sidebar .burger {
  height: 27px;
  margin-bottom: 2px;
}
.handle {
  position: absolute;
  left: -1px;
  top: calc(50% - 26px);
  width: 5px;
  height: 50px;
  background: #8e8e8e;
}
.handle::after {
  content: '';
  position: absolute;
  left: 0;
  top: 23px;
  border: 2px solid transparent;
  border-left: 3px solid #fff;
  border-right: 0;
}
.status {
  display: grid;
  grid-template-columns: 24px 147px 209fr 239fr 161fr 46px 30px 20px 20px 175fr 94px 35px;
  align-items: center;
  height: 17px;
  box-sizing: border-box;
  border-top: 1px solid #d2d0ce;
}
.status > span {
  padding-left: 5px;
  border-left: 1px solid #e2e0de;
  white-space: nowrap;
}
.status > span:empty {
  height: 12px;
}
.status > .doc,
.status > .first {
  border-color: transparent;
}
.status > .first {
  padding-left: 2px;
}
.doc svg {
  width: 13px;
  height: 13px;
}
.status .mid {
  text-align: center;
  padding: 0;
}
.cursor svg {
  width: 20px;
  height: 14px;
}
.zoom {
  display: flex;
  align-items: center;
  gap: 3px;
}
.zoom button {
  width: 8px;
  font-size: 13px;
  line-height: 12px;
  font-weight: 700;
}
.zoom input {
  appearance: none;
  width: 65px;
  height: 1px;
  background: #999;
}
.zoom input::-webkit-slider-thumb {
  appearance: none;
  width: 4px;
  height: 7px;
  border: 1px solid #444;
  background: #eee;
}
.status > .pct {
  border-color: transparent;
  padding-left: 7px;
}
</style>
